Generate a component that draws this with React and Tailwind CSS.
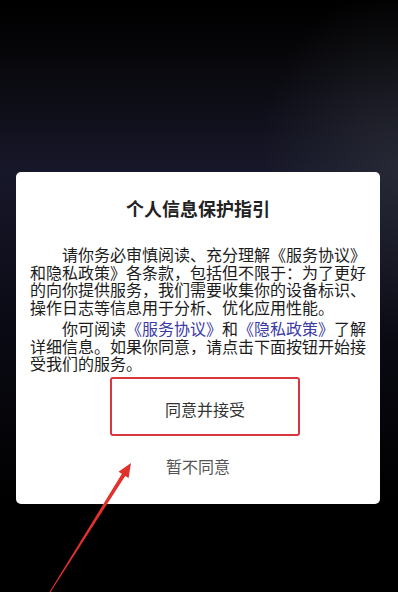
const FONT = '"Noto Sans CJK SC", "Noto Sans", sans-serif';

function Link({ children }) {
  return <span className="text-[#3a3aa6]">{children}</span>;
}

function PointerArrow() {
  return (
    <svg
      className="pointer-events-none absolute left-0 top-0"
      width="398"
      height="592"
      viewBox="0 0 398 592"
      aria-hidden="true"
    >
      <polygon
        points="49.6,591.7 121.9,473.8 118.5,471.7 131,463 128.6,478.05 125.2,475.9 50.4,592.3"
        fill="#e2302a"
      />
    </svg>
  );
}

export default function App() {
  return (
    <div
      className="relative h-[592px] w-[398px] overflow-hidden bg-[radial-gradient(ellipse_35%_30%_at_100%_28%,rgba(58,62,68,0.45),transparent),linear-gradient(180deg,#000_0px,#060609_50px,#10101c_120px,#17172a_172px,#0a0a14_330px,#000_506px)]"
      style={{ fontFamily: FONT }}
    >
      <div className="pt-[172px] pl-4">
        <div className="w-[364px] rounded-[5px] bg-white px-[14px] pt-[24px] pb-[28px]">
          <h1 className="text-center text-[18px] font-bold leading-6 text-[#222]">
            个人信息保护指引
          </h1>

          <div className="mt-[26px] text-[16px] leading-[17.7px] text-[#1c1c1c]">
            <p className="whitespace-nowrap">
              <span className="inline-block w-8" />请你务必审慎阅读、充分理解《服务协议》
              <br />
              和隐私政策》各条款，包括但不限于：为了更好
              <br />
              的向你提供服务，我们需要收集你的设备标识、
              <br />
              操作日志等信息用于分析、优化应用性能。
            </p>
            <p className="mt-[3px] whitespace-nowrap">
              <span className="inline-block w-8" />你可阅读<Link>《服务协议》</Link>和<Link>《隐私政策》</Link>了解
              <br />
              详细信息。如果你同意，请点击下面按钮开始接
              <br />
              受我们的服务。
            </p>
          </div>

          <div className="mt-[4px] flex">
            <button className="ml-[80px] flex h-[59px] w-[190px] items-center justify-center rounded-[3px] border-2 border-[#d9363e] pt-[5px] text-[16px] text-[#333]">
              同意并接受
            </button>
          </div>

          <div className="mt-[20px] text-center text-[16px] leading-5 text-[#555]">
            暂不同意
          </div>
        </div>
      </div>

      <PointerArrow />
    </div>
  );
}
